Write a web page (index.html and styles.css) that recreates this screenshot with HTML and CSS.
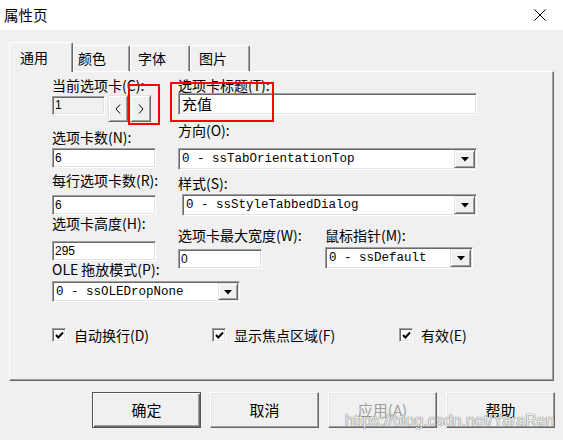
FILE: index.html
```html
<!DOCTYPE html>
<html lang="zh-CN">
<head>
<meta charset="utf-8">
<title>属性页</title>
<link rel="stylesheet" href="styles.css">
</head>
<body>
<div class="titlebar">
  <span class="title">属性页</span>
  <span class="close"><svg width="12" height="12" viewBox="0 0 12 12"><path d="M0.5 0.5 L11.5 11.5 M11.5 0.5 L0.5 11.5" stroke="#000" stroke-width="1" fill="none"/></svg></span>
</div>
<div class="client">
  <div class="tabs">
    <div class="tab active t1">通用</div>
    <div class="tab t2">颜色</div>
    <div class="tab t3">字体</div>
    <div class="tab t4">图片</div>
  </div>
  <div class="panel">
    <div class="cols">
      <div class="col col-left">
        <div class="lbl">当前选项卡(C):</div>
        <div class="spin-row">
          <div class="edit ro e-cur">1</div>
          <div class="raised spin spin-l"><svg width="6" height="10" viewBox="0 0 6 10"><polyline points="5,0.5 1,5 5,9.5" fill="none" stroke="#000" stroke-width="1"/></svg></div>
          <div class="raised spin spin-r"><svg width="6" height="10" viewBox="0 0 6 10"><polyline points="1,0.5 5,5 1,9.5" fill="none" stroke="#000" stroke-width="1"/></svg></div>
        </div>
        <div class="lbl l-count">选项卡数(N):</div>
        <div class="edit e-wide e-count">6</div>
        <div class="lbl l-row">每行选项卡数(R):</div>
        <div class="edit e-wide e-row">6</div>
        <div class="lbl">选项卡高度(H):</div>
        <div class="edit e-wide e-height">295</div>
        <div class="lbl">OLE 拖放模式(P):</div>
        <div class="combo c-ole"><span class="ctext">0 - ssOLEDropNone</span><span class="raised arrow"><svg width="8" height="5" viewBox="0 0 8 5"><polygon points="0,0 8,0 4,4.5" fill="#000"/></svg></span></div>
      </div>
      <div class="col col-right">
        <div class="lbl">选项卡标题(T):</div>
        <div class="edit e-caption">充值</div>
        <div class="lbl l-orient">方向(O):</div>
        <div class="combo c-orient"><span class="ctext">0 - ssTabOrientationTop</span><span class="raised arrow"><svg width="8" height="5" viewBox="0 0 8 5"><polygon points="0,0 8,0 4,4.5" fill="#000"/></svg></span></div>
        <div class="lbl l-style">样式(S):</div>
        <div class="combo c-style"><span class="ctext">0 - ssStyleTabbedDialog</span><span class="raised arrow"><svg width="8" height="5" viewBox="0 0 8 5"><polygon points="0,0 8,0 4,4.5" fill="#000"/></svg></span></div>
        <div class="pair">
          <div class="grp grp-a">
            <div class="lbl">选项卡最大宽度(W):</div>
            <div class="edit e-max">0</div>
          </div>
          <div class="grp grp-b">
            <div class="lbl">鼠标指针(M):</div>
            <div class="combo c-mouse"><span class="ctext">0 - ssDefault</span><span class="raised arrow"><svg width="8" height="5" viewBox="0 0 8 5"><polygon points="0,0 8,0 4,4.5" fill="#000"/></svg></span></div>
          </div>
        </div>
      </div>
    </div>
    <div class="checks">
      <label class="chk chk1"><span class="box"><svg width="9" height="9" viewBox="0 0 9 9"><polyline points="1,4 3.3,6.5 8,1.5" fill="none" stroke="#000" stroke-width="2"/></svg></span>自动换行(D)</label>
      <label class="chk chk2"><span class="box"><svg width="9" height="9" viewBox="0 0 9 9"><polyline points="1,4 3.3,6.5 8,1.5" fill="none" stroke="#000" stroke-width="2"/></svg></span>显示焦点区域(F)</label>
      <label class="chk chk3"><span class="box"><svg width="9" height="9" viewBox="0 0 9 9"><polyline points="1,4 3.3,6.5 8,1.5" fill="none" stroke="#000" stroke-width="2"/></svg></span>有效(E)</label>
    </div>
  </div>
  <div class="buttons">
    <div class="pb default">确定</div>
    <div class="pb">取消</div>
    <div class="pb disabled">应用(A)</div>
    <div class="pb">帮助</div>
  </div>
</div>
<div class="mark mark-spin"></div>
<div class="mark mark-caption"></div>
<div class="watermark">https://blog.csdn.net/YaraRen</div>
</body>
</html>
```

FILE: styles.css
```css
* { box-sizing: border-box; }
html, body { margin: 0; padding: 0; }
body {
  width: 563px;
  height: 440px;
  overflow: hidden;
  position: relative;
  background: #f0f0f0;
  color: #000;
  font-family: "Noto Sans CJK SC", "Noto Sans", sans-serif;
}

/* title bar */
.titlebar {
  height: 30px;
  background: #fff;
  display: flex;
  align-items: center;
  padding-left: 4px;
}
.title { font-size: 14.5px; line-height: 16px; }
.close {
  margin-left: auto;
  width: 46px;
  height: 30px;
  display: flex;
  align-items: center;
  justify-content: center;
}
.close svg { display: block; }

/* client area */
.client { padding-left: 9px; }

.tabs {
  display: flex;
  align-items: flex-end;
  height: 29px;
  margin-top: 12px;
}
.tab {
  height: 26px;
  font-size: 14px;
  line-height: 24px;
  background: #f0f0f0;
  border-top: 1px solid #fff;
  border-left: 1px solid #fff;
  border-right: 1px solid #696969;
  box-shadow: inset -1px 0 #a0a0a0;
  border-radius: 2px 2px 0 0;
}
.tab.active {
  height: 30px;
  line-height: 28px;
  margin-bottom: -1px;
  position: relative;
  z-index: 1;
}
.t1 { width: 64px; padding-left: 10px; }
.t2 { width: 57px; padding-left: 4px; }
.t3 { width: 60px; padding-left: 7px; }
.t4 { width: 60px; padding-left: 8px; }

.panel {
  width: 545px;
  height: 310px;
  border: 1px solid;
  border-color: #fff #696969 #696969 #fff;
  box-shadow: inset -1px -1px #a0a0a0;
  padding: 5px 0 0 42px;
}

.cols { display: flex; align-items: flex-start; }
.col { display: flex; flex-direction: column; align-items: flex-start; }
.col-left { width: 126px; flex: none; }

.lbl {
  font-size: 14px;
  line-height: 16px;
  height: 16px;
  white-space: nowrap;
}

/* sunken edit */
.edit, .combo, .box {
  background: #fff;
  border: 1px solid;
  border-color: #a0a0a0 #fff #fff #a0a0a0;
  box-shadow: inset 1px 1px #696969, inset -1px -1px #e3e3e3;
}
.edit {
  font-family: "Liberation Sans", Arial, sans-serif;
  font-size: 12px;
  line-height: 18px;
  height: 20px;
  padding-left: 2px;
}
.edit.ro { background: #f0f0f0; }

.raised {
  background: #f0f0f0;
  border: 1px solid;
  border-color: #e3e3e3 #696969 #696969 #e3e3e3;
  box-shadow: inset 1px 1px #fff, inset -1px -1px #a0a0a0;
  display: flex;
  align-items: center;
  justify-content: center;
}
.raised svg { display: block; }

.spin-row { display: flex; align-items: flex-start; margin-top: 2px; height: 27px; }
.e-cur { width: 53px; height: 19px; line-height: 17px; margin-top: 1px; }
.spin { height: 27px; }
.spin-l { width: 20px; margin-left: 3px; }
.spin-r { width: 21px; margin-left: 2px; }

.e-wide { width: 104px; }
.l-count { margin-top: 7px; }
.e-count { margin-top: 3px; }
.l-row { margin-top: 4px; }
.e-row { margin-top: 7px; }
.e-height { margin-top: 10px; }

.combo {
  display: flex;
  align-items: stretch;
  padding: 0 1px 0 3px;
  font-family: "Liberation Mono", "Courier New", monospace;
  font-size: 12.5px;
}
.ctext { align-self: center; line-height: 16px; white-space: nowrap; }
.arrow { margin: 1px 0 1px auto; width: 21px; flex: none; }
.arrow svg { margin-top: 1px; }

.c-ole { width: 188px; height: 21px; margin-top: 4px; }
.c-ole .arrow { width: 20px; }

.e-caption {
  width: 299px;
  height: 22px;
  line-height: 20px;
  font-family: "Noto Sans CJK SC", sans-serif;
  font-size: 15px;
  padding-left: 3px;
}
.l-orient { margin-top: 7px; }
.c-orient { width: 299px; height: 22px; margin-top: 10px; }
.l-style { margin-top: 5px; }
.c-style { width: 295px; height: 22px; margin-top: 3px; margin-left: 4px; }

.pair { display: flex; align-items: flex-start; margin-top: 11px; }
.grp { display: flex; flex-direction: column; align-items: flex-start; }
.grp-a { width: 147px; }
.e-max { width: 84px; margin-top: 6px; }
.c-mouse { width: 148px; height: 22px; margin-top: 4px; }

/* checkboxes */
.checks { display: flex; align-items: center; margin-top: 25px; height: 16px; }
.chk {
  display: flex;
  align-items: center;
  font-size: 14px;
  line-height: 16px;
  white-space: nowrap;
}
.chk1 { width: 160px; }
.chk2 { width: 187px; }
.box {
  width: 14px;
  height: 14px;
  margin-right: 8px;
  display: flex;
  align-items: center;
  justify-content: center;
}
.box svg { display: block; }

/* dialog buttons */
.buttons {
  display: flex;
  gap: 9px;
  margin-top: 11px;
  padding-left: 83px;
}
.pb {
  width: 109px;
  height: 36px;
  font-size: 15px;
  line-height: 20px;
  display: flex;
  align-items: center;
  justify-content: center;
  background: #f0f0f0;
  border: 1px solid;
  border-color: #fff #696969 #696969 #fff;
  box-shadow: inset -1px -1px #a0a0a0, inset 1px 1px #e3e3e3;
}
.pb.default {
  border-color: #555;
  box-shadow: inset 1px 1px #fff, inset -1px -1px #696969, inset -2px -2px #a0a0a0;
}
.pb.disabled { color: #a0a0a0; }

/* red annotation boxes drawn over the dialog */
.mark {
  position: absolute;
  border: 2px solid #f00;
}
.mark-spin { left: 128px; top: 84px; width: 32px; height: 41px; }
.mark-caption { left: 170px; top: 82px; width: 104px; height: 40px; }

.watermark {
  position: absolute;
  left: 345px;
  top: 413px;
  font-family: "Liberation Sans", Arial, sans-serif;
  font-size: 16px;
  line-height: 16px;
  color: rgba(255, 255, 255, 0.92);
  text-shadow: 0 0 1px rgba(0, 0, 0, 0.6), 0 0 1px rgba(0, 0, 0, 0.4);
  white-space: nowrap;
}
```
